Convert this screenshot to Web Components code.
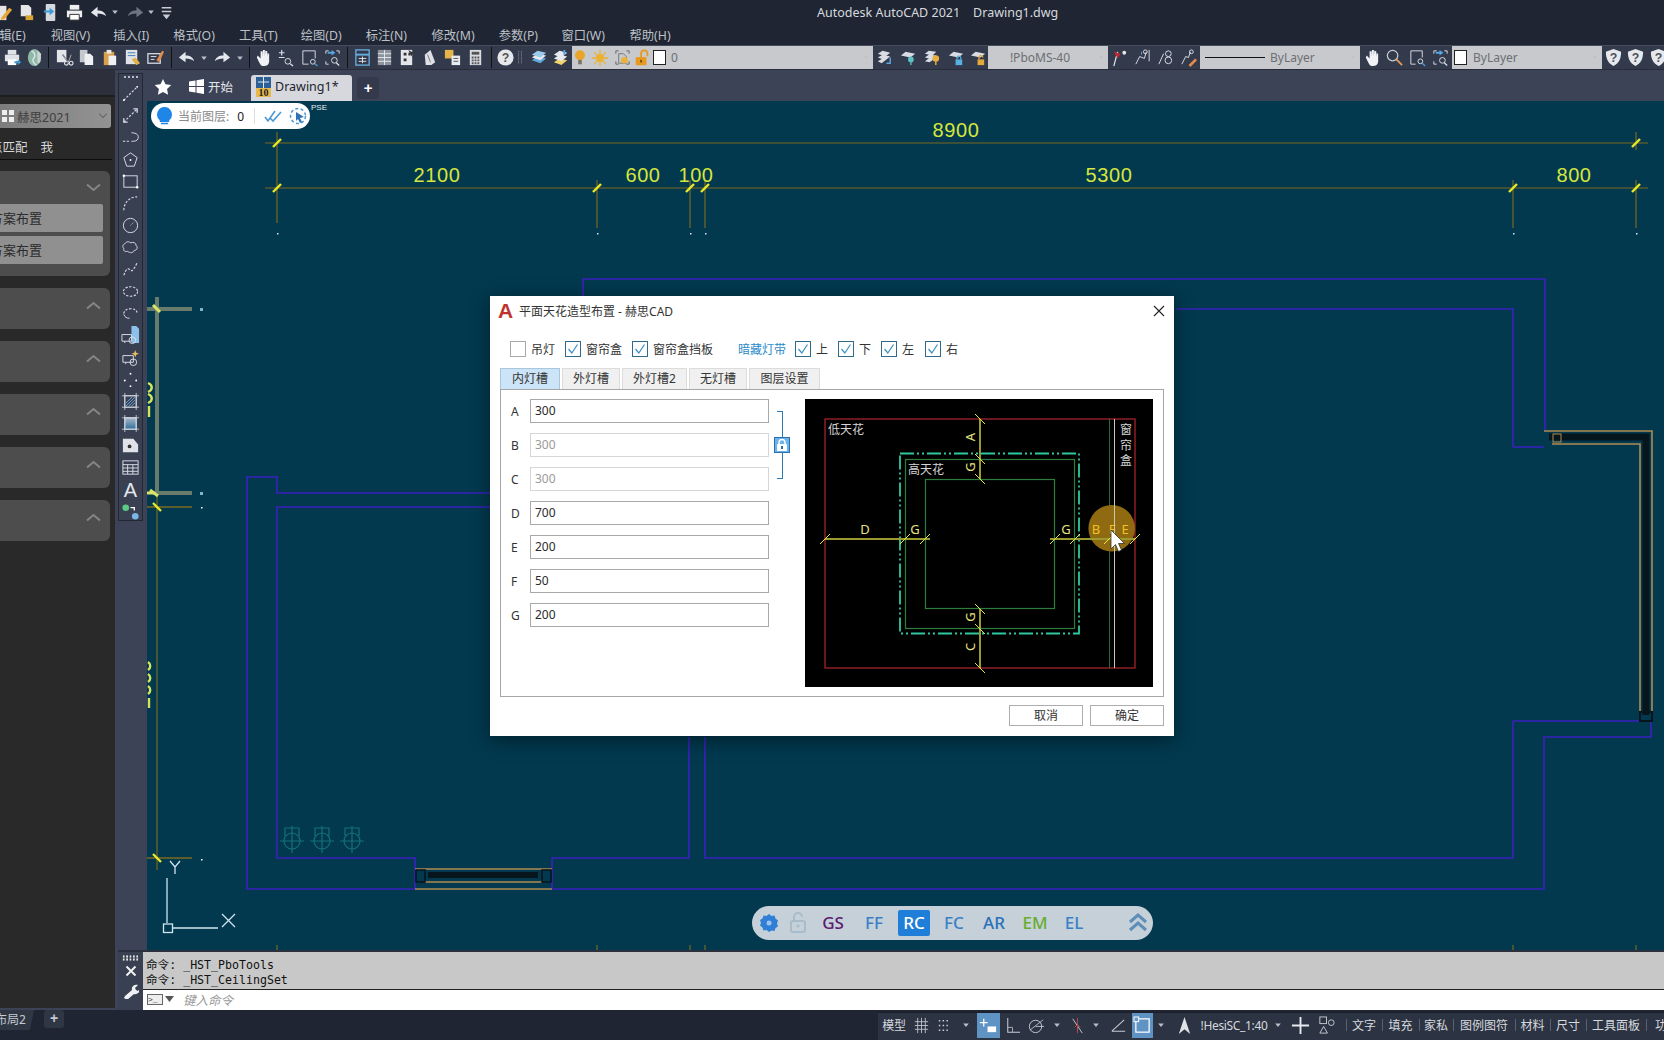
<!DOCTYPE html>
<html lang="zh">
<head>
<meta charset="utf-8">
<title>Autodesk AutoCAD 2021</title>
<style>
  html, body { margin: 0; height: 100%; background: #1f2532; overflow: hidden; }
  body {
    display: flex;
    flex-direction: column;
    width: 1664px;
    height: 1040px;
    font: 12px "Noto Sans", "Noto Sans CJK SC", sans-serif;
  }
</style>
</head>
<body>
<cad-titlebar></cad-titlebar>
<cad-menubar></cad-menubar>
<cad-toolbar></cad-toolbar>
<cad-workspace>
  <cad-palette slot="palette"></cad-palette>
  <cad-drawbar slot="drawbar"></cad-drawbar>
  <cad-tabs slot="tabs"></cad-tabs>
  <cad-viewport slot="view">
    <cad-dialog></cad-dialog>
  </cad-viewport>
  <cad-command slot="command"></cad-command>
</cad-workspace>
<cad-statusbar></cad-statusbar>

<script>
const UI_FONT = '"Noto Sans", "Noto Sans CJK SC", sans-serif';
const LIGHT = '#d9dee6';

/* ---------- ICONS, all on a 20x20 box ---------- */
const dotted = `fill="none" stroke="${LIGHT}" stroke-width="1.2" stroke-dasharray="2.4 1.6"`;
const thin = `fill="none" stroke="${LIGHT}" stroke-width="1"`;
const ICONS = {
  /* quick access */
  qnew: `<rect x="1" y="3" width="11" height="15" fill="#e6e6e6"/><path d="M7 15 15 5l3 2-8 10-4 1z" fill="#e8a53a"/>`,
  qopen: `<path d="M4 2h8l3 3v9H4z" fill="#e6e6e6"/><path d="M9 13h8v5H9z" fill="#d8a531"/>`,
  qsave: `<rect x="5" y="1" width="10" height="18" rx="1" fill="#d5d8dd"/><path d="M3 8h6V5l5 4-5 4v-3H3z" fill="#3f9ad8"/>`,
  print: `<path d="M5 2h10v5H5z" fill="#eee"/><path d="M2 8h16v7H2z" fill="#eee"/><path d="M5 12h10v6H5z" fill="#fff" stroke="#333"/>`,
  undo: `<path d="M2 10 9 4v4c5 0 8 2 9 6-2-2-5-3-9-3v4z" fill="#e4e7ec"/>`,
  redo: `<path d="M18 10 11 4v4c-5 0-8 2-9 6 2-2 5-3 9-3v4z" fill="#e4e7ec"/>`,
  redodim: `<path d="M18 10 11 4v4c-5 0-8 2-9 6 2-2 5-3 9-3v4z" fill="#6d7482"/>`,
  caret: `<path d="M6 8h8l-4 5z" fill="#b9bec7"/>`,
  qmenu: `<path d="M5 5h10M5 9h10" stroke="#c8ccd3" stroke-width="1.5"/><path d="M6 12h8l-4 5z" fill="#c8ccd3"/>`,
  /* standard toolbar */
  netprint: `<path d="M5 2h9v5H5z" fill="#dfe3e8"/><path d="M2 7h15v7H2z" fill="#dfe3e8"/><path d="M5 12h9v6H5z" fill="#fff"/><path d="M12 14h4v-2l3 3-3 3v-2h-4z" fill="#3d9ad6"/>`,
  globe: `<ellipse cx="10" cy="10" rx="7" ry="9" fill="#8fb8a8"/><path d="M7 3c4 2 4 6 2 8s1 6 3 7" stroke="#dfe8e4" stroke-width="1.4" fill="none"/><path d="M13 3l4 3-1 9-3 1z" fill="#cdd6d2"/>`,
  cut: `<rect x="2" y="2" width="10" height="13" fill="#e3e6eb"/><circle cx="12" cy="16" r="2" fill="none" stroke="#e3e6eb" stroke-width="1.2"/><circle cx="17" cy="16" r="2" fill="none" stroke="#e3e6eb" stroke-width="1.2"/><path d="M8 7l6 8M17 7l-3 8" stroke="#333" stroke-width="1.3"/><path d="M8 7l6 8M17 7l-3 8" stroke="#e3e6eb" stroke-width=".7"/>`,
  copy: `<path d="M3 2h8v13H3z" fill="#c3c7ce"/><path d="M8 6h6l3 3v9H8z" fill="#eef0f3"/>`,
  paste: `<path d="M4 4h11v14H4z" fill="#d8a04a"/><path d="M7 2h5v4H7z" fill="#e8e8e8"/><path d="M9 8h8v10H9z" fill="#eef0f3"/>`,
  match: `<rect x="3" y="2" width="12" height="15" fill="#dfe3e8"/><path d="M5 5h8M5 8h8" stroke="#3f7ab0"/><path d="M9 12l5 6 4-2-5-6z" fill="#e2b347"/>`,
  brush: `<rect x="2" y="6" width="13" height="10" fill="none" stroke="#dfe3e8" stroke-width="1.3"/><path d="M5 9h6M5 12h4" stroke="#dfe3e8"/><path d="M11 13 17 3l2 1-5 11z" fill="#e38b4a"/>`,
  hand: `<path d="M4 10l3 6c1 2 2 3 5 3 4 0 5-3 5-5V6l-1.600-.5L15 9V3.500L13 3l-.5 6V2h-2l-.5 7V3.500H8L8 11 5 8z" fill="#f0f2f5"/>`,
  zoomrt: `<path d="M6 2v6M3 5h6M3 10h6" stroke="${LIGHT}" stroke-width="1.3"/><circle cx="12.500" cy="14" r="3" ${thin}/><path d="M15 16.500l3 2.500" stroke="${LIGHT}" stroke-width="1.400"/>`,
  zoomwin: `<path d="M9 17H3V3h13v8" ${thin}/><circle cx="13.500" cy="14.500" r="2.500" ${thin}/><path d="M15.500 16.500l3 2.500" stroke="#4a9ad4" stroke-width="1.500"/>`,
  zoomprev: `<path d="M3 6V3h3M14 3h3v3M3 14v3h3" ${thin}/><path d="M5 5h6" stroke="#55a8e6" stroke-width="2"/><path d="M9 2l4 3-4 3z" fill="#55a8e6"/><circle cx="12" cy="13" r="3" ${thin}/><path d="M14 15.500l3 3" stroke="${LIGHT}" stroke-width="1.400"/>`,
  props: `<rect x="3" y="2" width="14" height="16" fill="none" stroke="#67aee0" stroke-width="1.400"/><path d="M3 7h14" stroke="#67aee0" stroke-width="2"/><path d="M6 11h8M6 14h8M10 9v7" stroke="#e0e4ea"/>`,
  dc: `<rect x="3" y="2" width="14" height="16" fill="#8d939d"/><path d="M10 2v16M3 6h14M3 10h14M3 14h14" stroke="#e6e8ec"/>`,
  tool: `<path d="M4 2h12v16H4z" fill="#e3e6ea"/><path d="M7 5h3v3H7zM12 5h2v3h-2zM7 11h3v3H7z" fill="#333"/><path d="M12 2l5 3-2 4z" fill="#333"/>`,
  sheet: `<path d="M5 7 11 2l5 13-4 3H6z" fill="#dde0e5"/><path d="M8 7l3 8" stroke="#777"/>`,
  markup: `<path d="M2 2h9v9H2z" fill="#e5b54a"/><path d="M9 8h9v10H9z" fill="#e8ebef"/><path d="M11 11h5M11 14h5" stroke="#555"/>`,
  calc: `<rect x="4" y="2" width="12" height="16" fill="#d8dbe0"/><path d="M6 4h8v3H6z" fill="#555"/><path d="M6 9h2v2H6zM9 9h2v2H9zM12 9h2v2h-2zM6 12h2v2H6zM9 12h2v2H9zM12 12h2v2h-2zM6 15h2v2H6zM9 15h2v2H9zM12 15h2v2h-2z" fill="#555"/>`,
  help: `<circle cx="10" cy="10" r="8.500" fill="#e6e8eb"/><text x="10" y="15" text-anchor="middle" font-family="Liberation Sans" font-weight="700" font-size="13" fill="#555">?</text>`,
  grip: `<path d="M8 3v14M11 3v14" stroke="#8d93a0" stroke-dasharray="1 1" fill="none"/>`,
  layers: `<path d="M3 13 9 9l9 2-6 5z" fill="#5fa7dc"/><path d="M3 10 9 6l9 2-6 5z" fill="#e7eaee"/><path d="M3 7 9 3l9 2-6 5z" fill="#9ccbee"/>`,
  layers2: `<path d="M3 15 9 11l8 2-6 5z" fill="#f0d36b"/><path d="M3 11 9 7l8 2-6 5z" fill="#e7eaee"/><path d="M3 7 9 3l8 2-6 5z" fill="#e7eaee"/><path d="M14 2v5" stroke="#4aa0e0" stroke-width="2"/>`,
  bulb: `<circle cx="10" cy="7" r="5.500" fill="#e9a52a"/><path d="M8 12h4v5H8z" fill="#7c7366"/>`,
  sun: `<circle cx="10" cy="10" r="4.500" fill="#eab134"/><path d="M10 1v18M1 10h18M3.500 3.500l13 13M16.500 3.500l-13 13" stroke="#eab134" stroke-width="1.400"/>`,
  frozen: `<path d="M3 6V3h3M14 3h3v3M3 14v3h3M14 17h3v-3" stroke="#666" fill="none"/><path d="M6 6h5l3 3v7H6z" fill="none" stroke="#777"/><circle cx="12" cy="13" r="3.500" fill="#e9b23c"/>`,
  lockopen: `<rect x="3" y="9" width="12" height="9" rx="1" fill="#e79a22"/><path d="M9 9V5a3.500 3.500 0 017 0v3" fill="none" stroke="#e79a22" stroke-width="2"/><rect x="8" y="12" width="2" height="3" fill="#7a4c08"/>`,
  lay1: `<path d="M3 6 8 3l8 2-5 4z" fill="#d9dde3"/><path d="M3 10 8 7l8 2-5 4z" fill="#d9dde3"/><path d="M3 14 8 11l4 1-5 4z" fill="#d9dde3"/><path d="M16 10v6h-4" stroke="#58a6e0" stroke-width="1.500" fill="none"/>`,
  lay2: `<path d="M2 8 7 4l10 2-5 4z" fill="#d9dde3"/><circle cx="12.500" cy="12" r="3" fill="#5cc0c4"/><path d="M12.500 14v4" stroke="#5cc0c4" stroke-width="1.400"/>`,
  lay3: `<path d="M2 6 6 3l8 1-4 4zM2 10 6 7l8 1-4 4zM2 14l4-3 5 1-4 3z" fill="#d9dde3"/><circle cx="13.500" cy="11" r="3.500" fill="#e8b040"/><path d="M13.500 14v4" stroke="#e8b040" stroke-width="1.500"/>`,
  lay4: `<path d="M2 8 7 4l10 2-5 4z" fill="#d9dde3"/><rect x="9" y="12" width="7" height="6" fill="#57b0de"/><path d="M10.500 12v-1.500a2 2 0 014 0V12" stroke="#57b0de" fill="none" stroke-width="1.300"/>`,
  lay5: `<path d="M2 8 7 4l10 2-5 4z" fill="#d9dde3"/><rect x="9" y="12" width="7" height="6" fill="#e2a93c"/><path d="M10.500 12v-2a2 2 0 014 0" stroke="#e2a93c" fill="none" stroke-width="1.300"/>`,
  match2: `<path d="M4 19 8 4" stroke="#e2e6ec" stroke-width="1.300"/><path d="M4 4l7 2-3 5z" fill="#c4282e"/><circle cx="15" cy="5" r="2" fill="#e6e6e6"/>`,
  grp1: `<path d="M3 17 7 9l5 2 2-7" ${thin}/><circle cx="13" cy="4" r="2" ${thin}/><path d="M17 2v12" stroke="${LIGHT}"/><path d="M9 4v3" stroke="#58a6e0"/>`,
  grp2: `<path d="M3 17 8 6" ${thin}/><circle cx="13" cy="6" r="3" ${thin}/><circle cx="13" cy="13" r="3.500" ${thin}/>`,
  grp3: `<path d="M3 17 7 9l3 1 2-6" ${thin}/><circle cx="13" cy="4" r="2" ${thin}/><path d="M10 18l7-7 2 2-7 7z" fill="#e38b4a"/>`,
  zoomb: `<circle cx="8" cy="8" r="5.500" fill="none" stroke="#c8ccd3" stroke-width="1.300"/><path d="M12 12l6 6" stroke="#e39a5a" stroke-width="2"/>`,
  zoomc: `<path d="M8 17H3V3h12v7" ${thin}/><circle cx="13" cy="14" r="2.500" ${thin}/><path d="M15 16l3 3" stroke="#4a9ad4" stroke-width="1.500"/>`,
  shield: `<path d="M10 1l8 3c0 7-2 12-8 15-6-3-8-8-8-15z" fill="#e6e8eb"/><text x="10" y="15" text-anchor="middle" font-family="Liberation Sans" font-weight="700" font-size="13" fill="#4b5262">?</text>`,
  /* draw bar */
  dline: `<path d="M3 17 17 3" ${dotted}/><circle cx="3" cy="17" r="1" fill="#fff"/><circle cx="17" cy="3" r="1" fill="#fff"/>`,
  dxline: `<path d="M3 17 17 3" ${dotted}/><path d="M13 3h4v4M3 13v4h4" stroke="${LIGHT}" stroke-width="1.400" fill="none"/>`,
  dpoly: `<path d="M2 14h8" ${dotted}/><path d="M11 5c6 0 8 3 7 6s-4 3-7 3" ${thin}/>`,
  dpolygon: `<path d="M10 3l7 5-3 9H6L3 8z" ${thin}/><circle cx="10" cy="10.500" r="1" fill="#fff"/>`,
  drect: `<rect x="3" y="4" width="14" height="12" ${thin}/><circle cx="3" cy="4" r="1.300" fill="#fff"/><circle cx="17" cy="16" r="1.300" fill="#fff"/>`,
  darc: `<path d="M3 17C3 9 9 3 17 3" ${dotted}/>`,
  dcircle: `<circle cx="10" cy="10" r="7.500" ${thin}/><path d="M10 10l4-4" stroke="#8fb6dc" stroke-dasharray="1.500 1"/>`,
  dcloud: `<path d="M4 6c2-3 5-2 6-1 3-1 6 0 6 3 2 2 1 5-2 5-1 3-5 3-7 1-3 1-5-1-4-3-2-2-1-4 1-5z" ${thin}/>`,
  dspline: `<path d="M3 16c2-6 4-8 6-6s3 3 8-7" ${dotted}/>`,
  dellipse: `<ellipse cx="10" cy="10" rx="7.500" ry="5" ${dotted}/>`,
  dearc: `<path d="M3 10c0-3 3-5 7-5s6 1 7 4" ${dotted}/><path d="M3 11c1 3 3 4 6 4" ${thin}/>`,
  dinsert: `<path d="M11 0h5l3 3v15h-8z" fill="#8cc1ee"/><path d="M1 9h10v7H1zM4 16v2" ${thin}/><circle cx="12" cy="15" r="3.500" ${thin}/>`,
  dblock: `<path d="M2 8h11v7H2zM5 15v2" ${thin}/><circle cx="13" cy="15" r="3.500" ${thin}/><path d="M15 2l1 3 3 1-3 1-1 3-1-3-3-1 3-1z" fill="#ecc060"/>`,
  dpoint: `<circle cx="10" cy="4" r="1" fill="#fff"/><circle cx="4" cy="11" r="1" fill="#fff"/><circle cx="16" cy="11" r="1" fill="#fff"/><circle cx="10" cy="17" r="1" fill="#fff"/>`,
  dhatch: `<rect x="4" y="4" width="12" height="12" ${thin}/><path d="M1 4h18M1 16h18M4 1v18M16 1v18" stroke="${LIGHT}" stroke-width=".8"/><path d="M5 12l7-7M5 15l10-10M8 15l7-7M11 15l4-4" stroke="#6fa8de"/>`,
  dgrad: `<defs><linearGradient id="g" x1="0" y1="0" x2="0" y2="1"><stop offset="0" stop-color="#a8b8c8"/><stop offset="1" stop-color="#2f6e9c"/></linearGradient></defs><rect x="4" y="4" width="12" height="12" fill="url(#g)" stroke="${LIGHT}"/><path d="M1 4h18M1 16h18M4 1v18M16 1v18" stroke="${LIGHT}" stroke-width=".8"/>`,
  dregion: `<path d="M2 3h11l5 6v8H2z" fill="#dfe3e8"/><circle cx="9" cy="11" r="2" fill="#333"/>`,
  dtable: `<rect x="2" y="3" width="16" height="14" ${thin}/><path d="M2 7h16M2 10.500h16M2 14h16M7 7v10M12.500 7v10" stroke="${LIGHT}"/>`,
  dtext: `<text x="10" y="18" text-anchor="middle" font-family="Liberation Sans" font-size="21" fill="#e4e8ee">A</text>`,
  dmulti: `<circle cx="5" cy="6" r="3.500" fill="#5cca82"/><circle cx="15" cy="15" r="3.500" fill="#78b8e8"/><path d="M10 6h4v3" stroke="#fff" stroke-width="1.400" fill="none"/>`,
  /* status bar */
  sgrid: `<path d="M3 6h14M3 10h14M3 14h14M6 2v16M10 2v16M14 2v16" stroke="#c6cad2" stroke-width=".9"/>`,
  sdots: `<path d="M4 5h12M4 10h12M4 15h12" stroke="#c6cad2" stroke-width="1.600" stroke-dasharray="1.600 2.400"/>`,
  sinfer: `<path d="M5 3v8M1 7h8" stroke="#fff" stroke-width="1.300"/><rect x="9" y="11" width="9" height="6" fill="#fff"/>`,
  sortho: `<path d="M5 2v15h13" stroke="#c6cad2" stroke-width="1.100" fill="none"/><path d="M5 12h5v5" stroke="#c6cad2" fill="none" stroke-width=".8"/>`,
  spolar: `<circle cx="9" cy="11" r="6.500" fill="none" stroke="#c6cad2" stroke-width="1"/><path d="M3 15 17 4M9 11h9" stroke="#c6cad2" stroke-width=".9"/>`,
  siso: `<path d="M5 3l10 15" stroke="#c6cad2" stroke-width="1"/><path d="M10 2v16M7 12l3-3 3 3" stroke="#b84a4a" fill="none"/>`,
  sangle: `<path d="M3 16 16 4M3 16h14" stroke="#c6cad2" stroke-width="1.100"/>`,
  ssnap: `<rect x="3" y="3" width="14" height="14" fill="none" stroke="#fff" stroke-width="1.300"/><rect x="1" y="1" width="5" height="5" fill="#6b9bc9" stroke="#fff"/>`,
  sanno: `<path d="M10 1l6 18-6-5-6 5z" fill="#dfe3e8"/>`,
  splus: `<path d="M10 1v18M1 10h18" stroke="#e6e9ee" stroke-width="2"/>`,
  sshapes: `<rect x="3" y="1" width="7" height="7" fill="none" stroke="#c6cad2"/><circle cx="15" cy="7" r="3" fill="none" stroke="#c6cad2"/><path d="M7 11l4 7H3z" fill="none" stroke="#c6cad2"/>`
};

class CadIcon extends HTMLElement {
  connectedCallback() {
    const size = this.getAttribute('size') || 18;
    const name = this.getAttribute('name');
    this.attachShadow({ mode: 'open' }).innerHTML = `
      <style>:host { display: inline-flex; align-items: center; justify-content: center; flex: none; } svg { display: block; flex: none; }</style>
      <svg width="${size}" height="${size}" viewBox="0 0 20 20">${ICONS[name] || ''}</svg>`;
  }
}
customElements.define('cad-icon', CadIcon);

/* row of [icon, cell width] pairs, used by the toolbars */
function iconCells(list, size) {
  return list.map(([name, w]) => {
    if (name === 'sep') return `<i class="sep" style="width:${w}px"></i>`;
    if (name === 'sp') return `<i style="display:block;flex:none;width:${w}px"></i>`;
    return `<cad-icon name="${name}" size="${name === 'caret' ? 14 : size}" style="width:${w}px"></cad-icon>`;
  }).join('');
}

class CadTitlebar extends HTMLElement {
  connectedCallback() {
    this.attachShadow({ mode: 'open' }).innerHTML = `
      <style>
        :host { display: flex; height: 24px; background: #1f2532; align-items: center; color: #d6d9df; font: 12.500px ${UI_FONT}; position: relative; flex: none; }
        .quick { display: flex; margin-left: -6px; width: 823px; flex: none; }
        .name { white-space: pre; }
      </style>
      <div class="quick">${iconCells([['qnew', 20], ['sp', 2], ['qopen', 20], ['sp', 4], ['qsave', 20], ['sp', 4], ['print', 20], ['sp', 4], ['undo', 20], ['caret', 14], ['sp', 3], ['redodim', 20], ['caret', 12], ['qmenu', 18]], 19)}</div>
      <span class="name">Autodesk AutoCAD 2021    Drawing1.dwg</span>`;
  }
}
customElements.define('cad-titlebar', CadTitlebar);

class CadMenubar extends HTMLElement {
  connectedCallback() {
    const items = [['编辑(E)', -13], ['视图(V)', 25], ['插入(I)', 23], ['格式(O)', 24], ['工具(T)', 24], ['绘图(D)', 23], ['标注(N)', 24], ['修改(M)', 24.5], ['参数(P)', 24], ['窗口(W)', 23.5], ['帮助(H)', 24.5]];
    this.attachShadow({ mode: 'open' }).innerHTML = `
      <style>
        :host { display: flex; height: 21px; background: #1f2532; align-items: center; color: #bcc0c8; font: 12.300px ${UI_FONT}; flex: none; overflow: hidden; }
        span { white-space: nowrap; flex: none; }
      </style>
      ${items.map(([t, m]) => `<span style="margin-left:${m}px">${t}</span>`).join('')}`;
  }
}
customElements.define('cad-menubar', CadMenubar);

class CadToolbar extends HTMLElement {
  connectedCallback() {
    const caret = `<cad-icon name="caret" size="12" class="dn"></cad-icon>`;
    this.attachShadow({ mode: 'open' }).innerHTML = `
      <style>
        :host { display: flex; height: 25px; background: #333a4b; border-top: 1px solid #454c5c; border-bottom: 1px solid #272c38; box-sizing: border-box; align-items: center; flex: none; overflow: hidden; font: 12px ${UI_FONT}; }
        cad-icon { flex: none; }
        .sep { display: block; flex: none; height: 21px; background: linear-gradient(#111,#111) center/1px 100% no-repeat; }
        .combo { flex: none; height: 23px; background: #c7c9cc; display: flex; align-items: center; color: #6d6f73; position: relative; box-sizing: border-box; }
        .dn { position: absolute; right: 1px; top: 5px; opacity: .55; }
        .swatch { width: 13px; height: 15px; background: #fff; border: 1px solid #222; box-sizing: border-box; flex: none; }
        .line { width: 60px; height: 1px; background: #111; margin: 0 5px; flex: none; }
      </style>
      ${iconCells([['netprint', 24], ['globe', 20], ['sep', 9], ['cut', 22], ['copy', 23], ['paste', 23], ['match', 23], ['brush', 23], ['sep', 8], ['undo', 22], ['caret', 14], ['redo', 22], ['caret', 14], ['sep', 4], ['hand', 22], ['zoomrt', 24], ['zoomwin', 24], ['zoomprev', 22], ['sep', 8], ['props', 22], ['dc', 22], ['tool', 23], ['sheet', 23], ['markup', 23], ['calc', 22], ['sep', 10], ['help', 18], ['grip', 13], ['layers', 22], ['layers2', 23]], 19)}
      <div class="combo" style="width:301px">
        <cad-icon name="bulb" size="18" style="width:16px"></cad-icon>
        <cad-icon name="sun" size="18" style="width:24px"></cad-icon>
        <cad-icon name="frozen" size="19" style="width:21px"></cad-icon>
        <cad-icon name="lockopen" size="18" style="width:18px"></cad-icon>
        <span class="swatch" style="margin-left:2px"></span>
        <span style="margin-left:5px">0</span>${caret}
      </div>
      ${iconCells([['lay1', 23], ['lay2', 25], ['lay3', 23], ['lay4', 24], ['lay5', 20]], 19)}
      <div class="combo" style="width:120px;justify-content:center;padding-right:16px">!PboMS-40${caret}</div>
      ${iconCells([['match2', 23], ['grp1', 23], ['grp2', 22], ['grp3', 24]], 19)}
      <div class="combo" style="width:160px"><span class="line"></span>ByLayer${caret}</div>
      ${iconCells([['hand', 22], ['zoomb', 24], ['zoomc', 23], ['zoomprev', 23]], 19)}
      <div class="combo" style="width:150px;padding-left:2px"><span class="swatch"></span><span style="margin-left:6px">ByLayer</span>${caret}</div>
      ${iconCells([['shield', 22], ['shield', 23], ['shield', 22]], 19)}`;
  }
}
customElements.define('cad-toolbar', CadToolbar);

/* main area: palette and draw bar on the left, tabs + drawing + command line */
class CadWorkspace extends HTMLElement {
  connectedCallback() {
    this.attachShadow({ mode: 'open' }).innerHTML = `
      <style>
        :host { display: grid; grid-template-columns: 118px 29px 1fr; grid-template-rows: 31px 849px 60px; height: 940px; background: #3c4356; flex: none; }
        slot { display: block; min-width: 0; }
        .pal { grid-row: 1 / 4; grid-column: 1; }
        .bar { grid-row: 1 / 3; grid-column: 2; }
        .tabs { grid-row: 1; grid-column: 3; }
        .view { grid-row: 2; grid-column: 3; }
        .cmd { grid-row: 3; grid-column: 2 / 4; }
      </style>
      <slot class="pal" name="palette"></slot>
      <slot class="bar" name="drawbar"></slot>
      <slot class="tabs" name="tabs"></slot>
      <slot class="view" name="view"></slot>
      <slot class="cmd" name="command"></slot>`;
  }
}
customElements.define('cad-workspace', CadWorkspace);

class CadGroup extends HTMLElement {
  connectedCallback() {
    const open = this.hasAttribute('open');
    this.attachShadow({ mode: 'open' }).innerHTML = `
      <style>
        :host { display: block; background: #4d4d4d; border-radius: 0 6px 6px 0; width: 110px; margin-top: 12px; box-sizing: border-box; padding-bottom: ${open ? 12 : 0}px; overflow: hidden; }
        .head { height: ${open ? 33 : 41}px; display: flex; align-items: ${open ? 'center' : 'flex-start'}; justify-content: flex-end; padding: ${open ? 0 : 13}px 9px 0 0; box-sizing: border-box; }
      </style>
      <div class="head"><svg width="15" height="9" viewBox="0 0 15 9"><path d="${open ? 'M1 1.500 7.500 7 14 1.500' : 'M1 7.500 7.500 2 14 7.500'}" fill="none" stroke="#858585" stroke-width="2"/></svg></div>
      <slot></slot>`;
  }
}
customElements.define('cad-group', CadGroup);

class CadPalette extends HTMLElement {
  connectedCallback() {
    this.attachShadow({ mode: 'open' }).innerHTML = `
      <style>
        :host { display: block; height: 938px; width: 115px; background: #292929; overflow: hidden; color: #d8d8d8; font: 12.500px ${UI_FONT}; }
        .top { height: 27px; background: #2d303b; border-bottom: 2px solid #1e1e1e; box-sizing: border-box; }
        .combo { margin: 7px 4px 0 0; height: 24px; background: linear-gradient(90deg,#7d7d7d,#939393); border-radius: 0 3px 3px 0; display: flex; align-items: center; color: #3e3e3e; position: relative; }
        .combo svg { margin: 0 3px 0 2px; }
        .combo i { position: absolute; right: 5px; top: 7px; width: 5px; height: 5px; border: solid #666; border-width: 0 1.500px 1.500px 0; transform: rotate(45deg); }
        .row { height: 32px; width: 112px; border-bottom: 1px solid #0d0d0d; box-sizing: border-box; display: flex; align-items: center; white-space: nowrap; padding-top: 5px; }
        .row span:first-child { margin-left: -10px; }
        .row span + span { margin-left: 13px; }
        .btn { display: block; height: 28px; line-height: 28px; width: 103px; background: #909090; margin-top: 4px; color: #2b2b2b; border-radius: 0 2px 2px 0; white-space: nowrap; overflow: hidden; font-size: 13px; text-indent: -10px; }
      </style>
      <div class="top"></div>
      <div class="combo">
        <svg width="12" height="12" viewBox="0 0 12 12"><path d="M0 0h5v5H0zM7 0h5v5H7zM0 7h5v5H0zM7 7h5v5H7z" fill="#eee"/></svg>
        赫思2021<i></i>
      </div>
      <div class="row"><span>点匹配</span><span>我</span></div>
      <cad-group open style="margin-top:11px"><span class="btn" style="margin-top:0">方案布置</span><span class="btn">方案布置</span></cad-group>
      <cad-group></cad-group>
      <cad-group></cad-group>
      <cad-group></cad-group>
      <cad-group></cad-group>
      <cad-group></cad-group>`;
  }
}
customElements.define('cad-palette', CadPalette);

class CadDrawbar extends HTMLElement {
  connectedCallback() {
    const names = ['dline', 'dxline', 'dpoly', 'dpolygon', 'drect', 'darc', 'dcircle', 'dcloud', 'dspline', 'dellipse', 'dearc', 'dinsert', 'dblock', 'dpoint', 'dhatch', 'dgrad', 'dregion', 'dtable', 'dtext', 'dmulti'];
    this.attachShadow({ mode: 'open' }).innerHTML = `
      <style>
        :host { display: block; }
        .bar { width: 25px; height: 448px; margin-top: 3px; background: #394052; border: 1px solid #232833; box-sizing: border-box; display: flex; flex-direction: column; align-items: center; }
        .grip { height: 6px; width: 14px; flex: none; border-top: 2px dotted #b8bcc6; margin-top: 2px; box-sizing: border-box; }
        cad-icon { height: 22px; }
      </style>
      <div class="bar"><div class="grip"></div>${names.map(n => `<cad-icon name="${n}" size="19"></cad-icon>`).join('')}</div>`;
  }
}
customElements.define('cad-drawbar', CadDrawbar);

class CadTabs extends HTMLElement {
  connectedCallback() {
    this.attachShadow({ mode: 'open' }).innerHTML = `
      <style>
        :host { display: flex; height: 31px; align-items: flex-end; color: #e3e5ea; font: 12.500px ${UI_FONT}; }
        .cell { display: flex; align-items: center; height: 26px; flex: none; box-sizing: border-box; padding-bottom: 3px; }
        .doc { width: 101px; background: #d6d8de; color: #1e2430; border-radius: 3px 3px 0 0; padding-left: 5px; gap: 4px; margin-left: 18px; }
        .plus { width: 22px; height: 22px; margin: 0 0 2px 5px; justify-content: center; background: #343a4b; border-radius: 3px; font: 700 15px "Liberation Sans", sans-serif; color: #fff; padding-bottom: 1px; }
      </style>
      <div class="cell" style="margin-left:7px;width:18px">
        <svg width="18" height="18" viewBox="0 0 20 20"><path d="M10 1l2.800 6 6.400.8-4.700 4.400 1.200 6.500L10 15.500l-5.700 3.200 1.200-6.500L.8 7.800 7.200 7z" fill="#fff"/></svg>
      </div>
      <div class="cell" style="margin-left:17px;gap:4px">
        <svg width="15" height="15" viewBox="0 0 15 15"><path d="M0 2.500 6.500 1.500v5.500H0zM7.500 1.300 15 0v7H7.500zM0 8h6.500v5.500L0 12.500zM7.500 8H15v7l-7.500-1.300z" fill="#fff"/></svg>
        开始
      </div>
      <div class="cell doc">
        <svg width="15" height="20" viewBox="0 0 15 20"><path d="M0 0h15v11H0z" fill="#2c5f96"/><path d="M7.500 0v11M2 5h11" stroke="#dfe8f0"/><path d="M0 11h15v9H0z" fill="#e8b84a"/><text x="7.500" y="19" text-anchor="middle" font-family="Liberation Serif" font-weight="700" font-size="10" fill="#222">10</text></svg>
        Drawing1*
      </div>
      <div class="cell plus">+</div>`;
  }
}
customElements.define('cad-tabs', CadTabs);

/* ---------- DRAWING: page coordinates, viewBox starts at the viewport corner ---------- */
class CadViewport extends HTMLElement {
  drawing() {
    const wall = 'fill="none" stroke="#3a22be" stroke-width="1.600"';
    const olive = '#7a6a20';
    const gold = '#b08c52';
    const ticks = (pts) => pts.map(([x, y]) => `<path d="M${x - 4} ${y + 4}L${x + 4} ${y - 4}" stroke="#e7e82c" stroke-width="2.400"/>`).join('');
    const xs = [277, 597, 690, 705, 1513, 1636];
    const labels = [['8900', 956, 137], ['2100', 437, 182], ['600', 643, 182], ['100', 696, 182], ['5300', 1109, 182], ['800', 1574, 182]];
    const fixture = (x) => `<g fill="none" stroke="#14707a" stroke-width="1.200"><circle cx="${x}" cy="841" r="8"/><path d="M${x - 12} 841h24M${x} 826v27"/><path d="M${x - 7} 836v-8h14v8"/></g>`;
    return `
      <g fill="none" stroke="${olive}" stroke-width="1.200">
        <path d="M265 143H1648M265 188H1648M277 132V223"/>
        ${xs.slice(1).map(x => `<path d="M${x} 180V228"/>`).join('')}
        <path d="M1636 132V150"/>
        ${xs.map(x => `<path d="M${x} 945V950"/>`).join('')}
        <path d="M157 493V870"/>
        <path d="M147 507H192M147 858H192" stroke-width="1.600"/>
      </g>
      ${ticks(xs.map(x => [x, 188]))}${ticks([[277, 143], [1636, 143]])}
      ${xs.map(x => `<rect x="${x}" y="233" width="1.500" height="1.500" fill="#dfe8ee"/>`).join('')}
      <g font-family="Liberation Sans" font-size="20" fill="#d6e63c" text-anchor="middle">
        ${labels.map(([t, x, y]) => `<text x="${x}" y="${y}" letter-spacing=".6">${t}</text>`).join('')}
      </g>

      <path d="M583 296V279H1545V431M1513 447V309H1176M1513 447H1544M1513 721V858H705V737" ${wall}/>
      <path d="M1513 721H1651V737H1544V889H552V858H689V737" ${wall}/>
      <path d="M490 493H277V477H247V889H415V858H277V507H490" ${wall}/>

      <g fill="none">
        <path d="M1549 437H1646V715" stroke="#07151d" stroke-width="7"/>
        <path d="M1544 431H1652V715M1552 444H1640V712" stroke="${gold}" stroke-width="1.600"/>
        <rect x="1553" y="434" width="8" height="8" stroke="${gold}"/>
        <path d="M1640 712h12v9h-12z" stroke="#07151d" stroke-width="2"/>
        <path d="M428 875H538" stroke="#07151d" stroke-width="6"/>
        <path d="M415 869H552M425 882H542" stroke="${gold}" stroke-width="1.400"/>
        <path d="M415 889H552" stroke="${gold}" stroke-width="1.600"/>
        <path d="M416 870h9v12h-9zM542 870h9v12h-9z" stroke="#07151d" stroke-width="1.600"/>
      </g>

      <g stroke="#6f7f6e" stroke-width="4" fill="none" opacity=".95">
        <path d="M157 297V493M147 309H192M157 493H192"/>
      </g>
      <path d="M153 305l7 7M147 493h8" stroke="#d8e46a" stroke-width="3"/>
      <path d="M150 490l8 6" stroke="#d8e46a" stroke-width="3"/>
      <path d="M153 503l8 8M153 854l8 8" stroke="#e7e82c" stroke-width="2.400"/>
      <g fill="none" stroke="#d7e25a" stroke-width="2.400">
        <path d="M148 383c5 2 5 7 0 9M148 394c5 2 5 7 0 9M149 406v11"/>
        <path d="M148 662c3 2 3 6 0 8M148 674c3 2 3 6 0 8M148 686c3 2 3 6 0 8M149 698v10"/>
      </g>
      <rect x="200" y="308" width="3" height="3" fill="#7cb8c8"/><rect x="200" y="492" width="3" height="3" fill="#7cb8c8"/>
      <rect x="201" y="507" width="1.500" height="1.500" fill="#fff"/><rect x="201" y="859" width="1.500" height="1.500" fill="#fff"/>

      ${fixture(292)}${fixture(322)}${fixture(352)}

      <g fill="none" stroke="#cfe6ee" stroke-width="1.300">
        <path d="M167 878V923M172 928H218"/>
        <rect x="163.500" y="924" width="9" height="8.500"/>
        <path d="M170 861l5 6 5-6M175 867v7"/>
        <path d="M222 914l13 13M235 914l-13 13"/>
      </g>`;
  }

  connectedCallback() {
    this.attachShadow({ mode: 'open' }).innerHTML = `
      <style>
        :host { display: block; position: relative; height: 849px; background: #02394f; overflow: hidden; }
        svg { position: absolute; inset: 0; }
        .layer { position: absolute; left: 4px; top: 2px; width: 159px; height: 26px; background: #fff; border-radius: 13px; display: flex; align-items: center; font: 12px ${UI_FONT}; color: #8a8a8a; white-space: nowrap; }
        .layer b { font-weight: 400; color: #222; margin-left: 8px; }
        .layer i { width: 1px; height: 16px; background: #ddd; margin: 0 9px 0 10px; flex: none; }
        .layer svg { position: static; flex: none; }
        .pse { position: absolute; left: 164px; top: 2px; color: #e6edf2; font: 8px "Liberation Sans", sans-serif; }
        .pill { position: absolute; left: 605px; top: 805px; width: 401px; height: 34px; background: #c5d0d8; border-radius: 17px; font: 500 17px "Noto Sans", sans-serif; display: flex; align-items: center; color: #3a80c8; }
        .pill span { position: absolute; transform: translateX(-50%); line-height: 26px; height: 26px; }
        .pill .on { background: #1f7ed8; color: #fff; width: 32px; text-align: center; border-radius: 2px; }
        .pill svg { position: absolute; inset: auto; }
      </style>
      <svg width="1517" height="849" viewBox="147 101 1517 849">${this.drawing()}</svg>
      <div class="layer">
        <svg style="margin:0 6px 0 6px" width="15" height="18" viewBox="0 0 15 18"><path d="M7.500 0a7.500 7.500 0 015 13l-.5 2H3l-.5-2a7.500 7.500 0 015-13z" fill="#1f86e8"/><path d="M4 16.500h7" stroke="#1f86e8" stroke-width="1.500"/></svg>
        当前图层:<b>0</b><i></i>
        <svg width="18" height="14" viewBox="0 0 18 14"><path d="M1 8l3 4L11 2M6 9l3 3L17 3" fill="none" stroke="#4d97d0" stroke-width="1.600"/></svg>
        <svg style="margin-left:7px" width="18" height="18" viewBox="0 0 18 18"><circle cx="9" cy="9" r="7.500" fill="none" stroke="#4d97d0" stroke-width="1.500" stroke-dasharray="3 2.400"/><path d="M7 5l8 5-4 1 2 4-2 1-2-4-2 2z" fill="#2e72b8"/></svg>
      </div>
      <div class="pse">PSE</div>
      <div class="pill">
        <svg style="left:8px;top:8px" width="18" height="18" viewBox="0 0 18 18"><path d="M9 0l2.500 2 3-.4 1 3 2.500 1.900-1 3 1 3-2.500 1.500-1 3-3-.4L9 18l-2.500-2-3 .4-1-3L0 11.500l1-2.500-1-3 2.500-1.500 1-3 3 .4z" fill="#2f7fd6"/><circle cx="9" cy="9" r="2.500" fill="#9cc4ea"/></svg>
        <svg style="left:38px;top:6px" width="16" height="21" viewBox="0 0 16 21"><rect x="1" y="9" width="14" height="11" rx="2" fill="none" stroke="#a9bccb" stroke-width="2"/><path d="M4 9V5a4 4 0 018 0" fill="none" stroke="#a9bccb" stroke-width="2"/><circle cx="8" cy="14" r="1.500" fill="#a9bccb"/></svg>
        <span style="left:81px;color:#5b1a72">GS</span>
        <span style="left:122px">FF</span>
        <span class="on" style="left:162px">RC</span>
        <span style="left:202px">FC</span>
        <span style="left:242px;color:#2a70ba">AR</span>
        <span style="left:283px;color:#68ad2e">EM</span>
        <span style="left:322px">EL</span>
        <svg style="left:377px;top:7px" width="18" height="20" viewBox="0 0 18 20"><path d="M1 9l8-7 8 7M1 17l8-7 8 7" fill="none" stroke="#5f8fb8" stroke-width="3"/></svg>
      </div>
      <slot></slot>`;
  }
}
customElements.define('cad-viewport', CadViewport);

/* ---------- DIALOG ---------- */
class CadCheck extends HTMLElement {
  connectedCallback() {
    const on = this.hasAttribute('checked');
    this.attachShadow({ mode: 'open' }).innerHTML = `
      <style>
        :host { display: inline-flex; align-items: center; gap: 5px; color: #333; font: 12px ${UI_FONT}; flex: none; }
        .box { width: 16px; height: 16px; box-sizing: border-box; border: 1px solid ${on ? '#2f6a8a' : '#a8a8a8'}; background: #fff; display: block; }
      </style>
      <svg class="box" viewBox="0 0 14 14">${on ? '<path d="M2.500 7 5.800 11 11.500 2.500" fill="none" stroke="#3a8fc4" stroke-width="1.200"/>' : ''}</svg>
      <slot></slot>`;
  }
}
customElements.define('cad-check', CadCheck);

class CadField extends HTMLElement {
  connectedCallback() {
    const off = this.hasAttribute('disabled');
    this.attachShadow({ mode: 'open' }).innerHTML = `
      <style>
        :host { display: flex; align-items: center; height: 24px; font: 12px ${UI_FONT}; color: #333; }
        label { width: 19px; }
        div { width: 239px; height: 24px; box-sizing: border-box; border: 1px solid ${off ? '#d6d6d6' : '#a9a9a9'}; padding-left: 4px; line-height: 21px; color: ${off ? '#9a9a9a' : '#2a2a2a'}; }
      </style>
      <label>${this.getAttribute('label')}</label><div>${this.getAttribute('value')}</div>`;
  }
}
customElements.define('cad-field', CadField);

class CadDiagram extends HTMLElement {
  connectedCallback() {
    const hTicks = [20, 100, 120, 250, 270, 304, 330].map(x => `<path d="M${x - 5} 145L${x + 5} 135"/>`).join('');
    const vTicks = [20, 60, 80, 210, 230, 269].map(y => `<path d="M170 ${y - 5}L180 ${y + 5}"/>`).join('');
    this.attachShadow({ mode: 'open' }).innerHTML = `
      <style>:host { display: block; width: 348px; height: 288px; background: #000; flex: none; } svg { display: block; }</style>
      <svg width="348" height="288" viewBox="0 0 348 288">
        <rect x="20" y="20" width="310" height="249" fill="none" stroke="#b0272e" stroke-width="1.200"/>
        <path d="M304.500 20V269" stroke="#2a6a4c"/>
        <rect x="100.500" y="60.500" width="169" height="169" fill="none" stroke="#2e7d3c" stroke-width="1.200"/>
        <rect x="120.500" y="80.500" width="129" height="129" fill="none" stroke="#2e7d3c" stroke-width="1.200"/>
        <rect x="95" y="54.500" width="179" height="180" fill="none" stroke="#2ec8a2" stroke-width="1.800" stroke-dasharray="14 3 2 3 2 3"/>
        <circle cx="306.700" cy="129.300" r="23.300" fill="#8f6a10"/>
        <path d="M309.500 20V269" stroke="#c8c8b0"/>
        <path d="M20 140H125M245 140H330M175 20V80M175 210V269" stroke="#9a9a2e" stroke-width="2"/>
        <g stroke="#e8e84a" stroke-width="1">${hTicks}${vTicks}</g>
        <g font-family="Noto Sans" font-size="13" fill="#e8e480" text-anchor="middle">
          <text x="60" y="135">D</text><text x="110" y="135">G</text><text x="261" y="135">G</text>
          <text x="291" y="135" fill="#f2c020">B</text><text x="307" y="135" fill="#f2c020">F</text><text x="320" y="135" fill="#f2c020">E</text>
          <text transform="translate(170 38) rotate(-90)">A</text><text transform="translate(170 68) rotate(-90)">G</text>
          <text transform="translate(170 218) rotate(-90)">G</text><text transform="translate(170 248) rotate(-90)">C</text>
        </g>
        <g font-family="Noto Sans CJK SC" font-size="12" fill="#d4d4d4">
          <text x="23" y="35">低天花</text><text x="103" y="75">高天花</text>
          <text x="315" y="35">窗</text><text x="315" y="51">帘</text><text x="315" y="66">盒</text>
        </g>
        <path d="M306 131V150L310.500 145.500 313.500 152.500 316.500 151 313.500 144.500H319.500Z" fill="#fff" stroke="#222" stroke-width=".7"/>
      </svg>`;
  }
}
customElements.define('cad-diagram', CadDiagram);

class CadDialog extends HTMLElement {
  connectedCallback() {
    const tabs = [['内灯槽', 60], ['外灯槽', 58], ['外灯槽2', 65], ['无灯槽', 58], ['图层设置', 71]];
    const fields = [['A', '300'], ['B', '300', 1], ['C', '300', 1], ['D', '700'], ['E', '200'], ['F', '50'], ['G', '200']];
    this.attachShadow({ mode: 'open' }).innerHTML = `
      <style>
        :host { position: absolute; left: 343px; top: 195px; width: 684px; height: 440px; background: #fff; box-shadow: 0 4px 18px rgba(0,0,0,.45); font: 12px ${UI_FONT}; color: #333; display: block; }
        .title { height: 30px; display: flex; align-items: center; padding-left: 8px; box-sizing: border-box; position: relative; }
        .logo { font: 700 21px "Liberation Sans", sans-serif; color: #c0332c; width: 21px; }
        .close { position: absolute; right: 8px; top: 8px; }
        .checks { display: flex; align-items: center; height: 20px; margin: 13px 0 0 20px; }
        .note { color: #2a8ac8; margin-left: 25px; }
        .tabs { display: flex; gap: 2px; margin: 9px 0 0 10px; height: 21px; }
        .tab { box-sizing: border-box; height: 21px; line-height: 20px; text-align: center; background: #f0f0f0; border: 1px solid #dcdcdc; border-bottom: 0; }
        .tab.on { background: #cce4f7; border-color: #a9c6dc; }
        .pane { margin: 0 10px; height: 308px; border: 1px solid #a6a6a6; box-sizing: border-box; display: flex; padding: 9px 10px 0 10px; }
        .fields { display: flex; flex-direction: column; gap: 10px; width: 294px; position: relative; flex: none; }
        .bracket { position: absolute; left: 266px; top: 12px; width: 5px; height: 66px; border: solid #2a7ab8; border-width: 1px 1px 1px 0; }
        .lock { position: absolute; left: 263px; top: 38px; width: 16px; height: 16px; background: #6eb2ea; border: 1px solid #2a70b0; box-sizing: border-box; display: flex; align-items: center; justify-content: center; }
        .foot { display: flex; justify-content: flex-end; gap: 7px; margin: 8px 10px 0 0; }
        .foot div { width: 74px; height: 21px; line-height: 19px; text-align: center; background: #fff; border: 1px solid #adadad; box-sizing: border-box; color: #333; }
      </style>
      <div class="title">
        <span class="logo">A</span>平面天花造型布置 - 赫思CAD
        <svg class="close" width="14" height="14" viewBox="0 0 14 14"><path d="M2 2l10 10M12 2L2 12" stroke="#222" stroke-width="1.100"/></svg>
      </div>
      <div class="checks">
        <cad-check>吊灯</cad-check>
        <cad-check checked style="margin-left:10px">窗帘盒</cad-check>
        <cad-check checked style="margin-left:10px">窗帘盒挡板</cad-check>
        <span class="note">暗藏灯带</span>
        <cad-check checked style="margin-left:9px">上</cad-check>
        <cad-check checked style="margin-left:10px">下</cad-check>
        <cad-check checked style="margin-left:10px">左</cad-check>
        <cad-check checked style="margin-left:11px">右</cad-check>
      </div>
      <div class="tabs">${tabs.map(([t, w], i) => `<div class="tab ${i ? '' : 'on'}" style="width:${w}px">${t}</div>`).join('')}</div>
      <div class="pane">
        <div class="fields">
          ${fields.map(([l, v, d]) => `<cad-field label="${l}" value="${v}" ${d ? 'disabled' : ''}></cad-field>`).join('')}
          <div class="bracket"></div>
          <div class="lock"><svg width="10" height="12" viewBox="0 0 10 12"><rect x="0" y="5" width="10" height="7" rx="1" fill="#fff"/><path d="M2 5V3.500a3 3 0 016 0V5" fill="none" stroke="#fff" stroke-width="1.500"/><rect x="4" y="7" width="2" height="3" fill="#2a70b0"/></svg></div>
        </div>
        <cad-diagram></cad-diagram>
      </div>
      <div class="foot"><div>取消</div><div>确定</div></div>`;
  }
}
customElements.define('cad-dialog', CadDialog);

class CadCommand extends HTMLElement {
  connectedCallback() {
    this.attachShadow({ mode: 'open' }).innerHTML = `
      <style>
        :host { display: grid; grid-template-columns: 25px 1fr; height: 60px; border-top: 2px solid #2a303d; box-sizing: border-box; background: #394052; }
        .side { display: flex; flex-direction: column; align-items: center; color: #fff; }
        .dots { width: 17px; height: 6px; margin-top: 3px; background: radial-gradient(circle, #e8e8e8 1px, transparent 1.200px) 0 0/3.400px 3px; }
        .main { display: flex; flex-direction: column; }
        .log { height: 38px; box-sizing: border-box; background: #c8c8c8; border-bottom: 1px solid #222; padding: 6px 0 0 3px; font: 11.600px/15px "DejaVu Sans Mono", "Noto Sans CJK SC", monospace; color: #111; white-space: pre; }
        .input { height: 20px; box-sizing: border-box; padding: 0 0 2px 4px; background: #fff; display: flex; align-items: center; color: #999; font: italic 12.500px ${UI_FONT}; }
        .prompt { width: 16px; height: 11px; border: 1px solid #666; background: #eee; font: normal 8px/10px "Liberation Mono", monospace; color: #333; display: block; box-sizing: border-box; margin-right: 2px; }
      </style>
      <div class="side">
        <div class="dots"></div>
        <svg style="margin-top:4px" width="12" height="12" viewBox="0 0 12 12"><path d="M1.500 1.500l9 9M10.500 1.500l-9 9" stroke="#eef0f3" stroke-width="2"/></svg>
        <svg style="margin-top:6px" width="16" height="16" viewBox="0 0 16 16"><path d="M1 15l1-2 7-6c-1-3 2-6 6-5l-3 3 1 2 2 1 2-3c1 4-3 7-6 6l-7 6z" fill="#eef0f3"/></svg>
      </div>
      <div class="main">
        <div class="log">命令: _HST_PboTools
命令: _HST_CeilingSet</div>
        <div class="input">
          <span class="prompt">&gt;_</span>
          <svg width="9" height="6" viewBox="0 0 9 6"><path d="M0 0h9L4.500 6z" fill="#555"/></svg>
          <span style="margin-left:9px">键入命令</span>
        </div>
      </div>`;
  }
}
customElements.define('cad-command', CadCommand);

class CadStatusbar extends HTMLElement {
  connectedCallback() {
    const cells = [['t', '模型', 32], ['i', 'sgrid', 22], ['i', 'sdots', 25], ['c', '', 18], ['gap', '', 2], ['on', 'sinfer', 23], ['i', 'sortho', 24], ['i', 'spolar', 24], ['c', '', 18], ['i', 'siso', 22], ['c', '', 16], ['i', 'sangle', 28], ['on', 'ssnap', 21], ['c', '', 16], ['gap', '', 3], ['i', 'sanno', 24], ['t', '!HesiSC_1:40', 76], ['c', '', 12], ['gap', '', 2], ['i', 'splus', 28], ['i', 'sshapes', 24], ['gap', '', 8], ['s', '文字', 36], ['s', '填充', 37], ['s', '家私', 34], ['s', '图例图符', 62], ['s', '材料', 35], ['s', '尺寸', 36], ['s', '工具面板', 60], ['s', '功', 30]];
    const html = cells.map(([k, v, w]) => {
      const style = `width:${w}px`;
      if (k === 't') return `<span class="c" style="${style};letter-spacing:-.35px">${v}</span>`;
      if (k === 's') return `<span class="c s" style="${style}">${v}</span>`;
      if (k === 'i') return `<cad-icon class="c" name="${v}" size="19" style="${style}"></cad-icon>`;
      if (k === 'on') return `<cad-icon class="c on" name="${v}" size="19" style="${style}"></cad-icon>`;
      if (k === 'c') return `<cad-icon class="c" name="caret" size="14" style="${style}"></cad-icon>`;
      return `<i class="c" style="${style}"></i>`;
    }).join('');
    this.attachShadow({ mode: 'open' }).innerHTML = `
      <style>
        :host { display: flex; height: 30px; background: #1f2532; color: #d6d9df; font: 12px ${UI_FONT}; flex: none; }
        .left { width: 878px; flex: none; display: flex; align-items: flex-start; overflow: hidden; }
        .lay { width: 34px; height: 20px; line-height: 20px; background: #2f3644; white-space: nowrap; overflow: hidden; transform: skewX(-12deg); margin-left: -2px; color: #c6cad2; }
        .lay span { display: block; transform: skewX(12deg); margin-left: -3px; }
        .add { width: 20px; height: 18px; margin-left: 12px; background: #2f3644; color: #c6cad2; text-align: center; font: 700 14px/17px "Liberation Sans", sans-serif; border-radius: 3px; }
        .bar { flex: 1; height: 28px; margin-top: 2px; padding-bottom: 3px; background: #2c3342; display: flex; align-items: center; overflow: hidden; border-top: 1px solid #1a1f2a; box-sizing: border-box; }
        .c { flex: none; display: flex; align-items: center; justify-content: center; height: 22px; white-space: nowrap; }
        .on { background: #5f93c4; height: 25px; }
        .s { position: relative; }
        .s::before { content: ''; position: absolute; left: 0; top: 5px; height: 12px; width: 1px; background: #586072; }
      </style>
      <div class="left"><div class="lay"><span>布局2</span></div><div class="add">+</div></div>
      <div class="bar">${html}</div>`;
  }
}
customElements.define('cad-statusbar', CadStatusbar);
</script>
</body>
</html>
